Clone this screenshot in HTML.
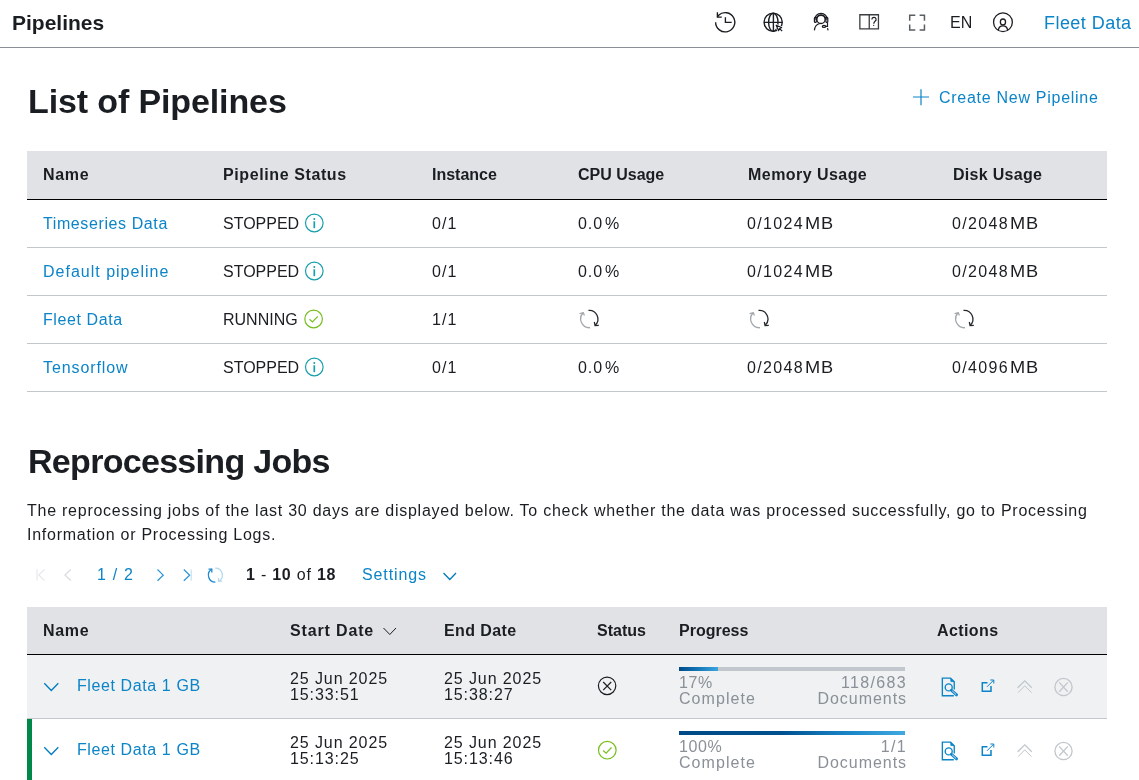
<!DOCTYPE html>
<html><head><meta charset="utf-8">
<style>
*{box-sizing:border-box;margin:0;padding:0}
html,body{width:1139px;height:780px;overflow:hidden;background:#fff}
body{font-family:"Liberation Sans",sans-serif;color:#1a1d21;position:relative;will-change:transform}
.abs{position:absolute;white-space:nowrap}
.blue{color:#0b84c8}
#topbar{position:absolute;left:0;top:0;width:1139px;height:48px;border-bottom:1px solid #8a9097}
.title{left:12px;top:11px;font-size:21px;font-weight:bold;line-height:24px;letter-spacing:0px}
h1{position:absolute;font-size:34px;font-weight:bold;line-height:40px;white-space:nowrap}
.box{position:absolute;left:27px;width:1080px}
.cell{position:absolute;white-space:nowrap;font-size:16px;line-height:20px}
.th{font-weight:bold}
svg{position:absolute;overflow:visible}
.lnk{letter-spacing:0.6px}
.num{letter-spacing:0.4px}
.prog{color:#8a9097;font-size:16px;line-height:16px;letter-spacing:0.5px}
</style></head>
<body>
<!-- top bar -->
<div id="topbar">
  <div class="abs title">Pipelines</div>
  <!-- history -->
  <svg style="left:713px;top:10px" width="24" height="24" viewBox="0 0 24 24" fill="none" stroke="#1a1d21" stroke-width="1.35">
    <path d="M2.6 12.3 A9.6 9.6 0 1 0 5.6 5.3 L4.4 7.15"/>
    <path d="M4.4 2.3 V7.15 H8.8"/>
    <path d="M12.4 7.15 V12.35 H18.7"/>
  </svg>
  <!-- globe -->
  <svg style="left:761px;top:10px" width="24" height="24" viewBox="0 0 24 24" fill="none" stroke="#1a1d21" stroke-width="1.4">
    <circle cx="12.15" cy="12.3" r="9.1"/>
    <ellipse cx="12.3" cy="12.3" rx="4.7" ry="9.1"/>
    <path d="M12.4 3.2 V21.4 M3.05 12.35 H21.25"/>
    <path d="M15.2 15.2 L21 17.6 L17.6 21 Z" fill="#fff" stroke="#fff" stroke-width="2.4"/>
    <path d="M15.2 15.2 L20.6 17.5 L18.6 18.6 L17.5 20.6 Z M18.6 18.6 L21.2 21.2" fill="#fff" stroke-width="1.2" stroke-linejoin="round"/>
  </svg>
  <!-- headset -->
  <svg style="left:809px;top:10px" width="24" height="24" viewBox="0 0 24 24" fill="none" stroke="#1a1d21" stroke-width="1.2">
    <circle cx="12" cy="9.4" r="4.1" stroke-width="1.3"/>
    <path d="M5.7 9.6 A6.3 6.3 0 0 1 18.3 9.6"/>
    <path d="M7 9.8 A5 5 0 0 1 17 9.8"/>
    <rect x="5.4" y="7.4" width="1.9" height="5" rx="0.9"/>
    <rect x="16.9" y="7.4" width="1.9" height="5" rx="0.9"/>
    <path d="M5.4 20.4 C5.8 16.5 8 14 11 13.5"/>
    <path d="M18.5 12.4 V16.3 H16.5"/>
    <ellipse cx="15" cy="16.4" rx="1.7" ry="1"/>
    <path d="M18.5 18.2 L19.1 20.4"/>
  </svg>
  <!-- book help -->
  <svg style="left:857px;top:10px" width="24" height="24" viewBox="0 0 24 24" fill="none" stroke="#3a3d41" stroke-width="1.3">
    <path d="M12.25 4.75 H2.85 V18.85 H21.45 V4.75 Z M12.25 4.75 V19.3" />
    <path d="M14.9 9.5 A2.1 2.1 0 1 1 17.8 11.4 C17.1 11.8 16.9 12.5 16.8 13.8" stroke="#1a1d21" stroke-width="1.2"/>
    <circle cx="16.7" cy="15.3" r="0.65" fill="#1a1d21" stroke="none"/>
  </svg>
  <!-- fullscreen -->
  <svg style="left:905px;top:10px" width="24" height="24" viewBox="0 0 24 24" fill="none" stroke="#595e62" stroke-width="1.5">
    <path d="M4.7 10.8 V5.15 H10.3 M14.6 5.15 H19.45 V10.8 M19.45 14.6 V19.95 H14.6 M10.3 19.95 H4.7 V14.6"/>
  </svg>
  <div class="abs" style="left:950px;top:13px;font-size:16px;line-height:20px">EN</div>
  <!-- user -->
  <svg style="left:991px;top:10px" width="24" height="24" viewBox="0 0 24 24" fill="none" stroke="#1a1d21" stroke-width="1.3">
    <circle cx="11.95" cy="12.25" r="9.4"/>
    <ellipse cx="11.95" cy="11.9" rx="2.6" ry="2.9"/>
    <path d="M7.4 20.3 C7.6 17.3 9.5 15.9 11.95 15.9 C14.4 15.9 16.3 17.3 16.6 20.3"/>
  </svg>
  <div class="abs blue" style="left:1044px;top:12px;font-size:18px;line-height:22px;letter-spacing:0.45px">Fleet Data</div>
</div>

<h1 style="left:28px;top:81px;letter-spacing:-0.12px">List of Pipelines</h1>
<svg style="left:911px;top:87px" width="20" height="20" viewBox="0 0 20 20" fill="none" stroke="#0b84c8" stroke-width="1.2">
  <path d="M10 2.3 V18.2 M2 10 H18"/>
</svg>
<div class="abs blue" style="left:939px;top:88px;font-size:16px;line-height:20px;letter-spacing:0.72px">Create New Pipeline</div>

<!-- table 1 -->
<div class="box" style="top:151px;height:49px;background:#e0e2e5;border-bottom:1px solid #000"></div>
<div class="box" style="top:200px;height:48px;border-bottom:1px solid #c1c7cc"></div>
<div class="box" style="top:247px;height:49px;border-bottom:1px solid #c1c7cc"></div>
<div class="box" style="top:295px;height:49px;border-bottom:1px solid #c1c7cc"></div>
<div class="box" style="top:343px;height:49px;border-bottom:1px solid #c1c7cc"></div>

<div class="cell th" style="left:43px;top:165px;letter-spacing:0.7px">Name</div>
<div class="cell th" style="left:223px;top:165px;letter-spacing:0.6px">Pipeline Status</div>
<div class="cell th" style="left:432px;top:165px">Instance</div>
<div class="cell th" style="left:578px;top:165px">CPU Usage</div>
<div class="cell th" style="left:748px;top:165px;letter-spacing:0.45px">Memory Usage</div>
<div class="cell th" style="left:953px;top:165px;letter-spacing:0.3px">Disk Usage</div>

<div class="cell blue lnk" style="left:43px;top:214px">Timeseries Data</div>
<div class="cell" style="left:223px;top:214px">STOPPED</div>
<div class="cell num" style="letter-spacing:1.1px;left:432px;top:214px">0/1</div>
<div class="cell" style="left:578px;top:214px"><span style="letter-spacing:0.9px">0.0</span><span style="margin-left:2px">%</span></div>
<div class="cell" style="left:747px;top:214px"><span style="letter-spacing:1.35px">0/1024</span><span style="margin-left:1px;letter-spacing:0.6px;display:inline-block;transform:scaleX(1.14);transform-origin:0 0">MB</span></div>
<div class="cell" style="left:952px;top:214px"><span style="letter-spacing:1.35px">0/2048</span><span style="margin-left:1px;letter-spacing:0.6px;display:inline-block;transform:scaleX(1.14);transform-origin:0 0">MB</span></div>

<div class="cell blue lnk" style="left:43px;top:262px;letter-spacing:1px">Default pipeline</div>
<div class="cell" style="left:223px;top:262px">STOPPED</div>
<div class="cell num" style="letter-spacing:1.1px;left:432px;top:262px">0/1</div>
<div class="cell" style="left:578px;top:262px"><span style="letter-spacing:0.9px">0.0</span><span style="margin-left:2px">%</span></div>
<div class="cell" style="left:747px;top:262px"><span style="letter-spacing:1.35px">0/1024</span><span style="margin-left:1px;letter-spacing:0.6px;display:inline-block;transform:scaleX(1.14);transform-origin:0 0">MB</span></div>
<div class="cell" style="left:952px;top:262px"><span style="letter-spacing:1.35px">0/2048</span><span style="margin-left:1px;letter-spacing:0.6px;display:inline-block;transform:scaleX(1.14);transform-origin:0 0">MB</span></div>

<div class="cell blue lnk" style="left:43px;top:310px">Fleet Data</div>
<div class="cell" style="left:223px;top:310px">RUNNING</div>
<div class="cell num" style="letter-spacing:1.1px;left:432px;top:310px">1/1</div>

<div class="cell blue lnk" style="left:43px;top:358px;letter-spacing:0.9px">Tensorflow</div>
<div class="cell" style="left:223px;top:358px">STOPPED</div>
<div class="cell num" style="letter-spacing:1.1px;left:432px;top:358px">0/1</div>
<div class="cell" style="left:578px;top:358px"><span style="letter-spacing:0.9px">0.0</span><span style="margin-left:2px">%</span></div>
<div class="cell" style="left:747px;top:358px"><span style="letter-spacing:1.35px">0/2048</span><span style="margin-left:1px;letter-spacing:0.6px;display:inline-block;transform:scaleX(1.14);transform-origin:0 0">MB</span></div>
<div class="cell" style="left:952px;top:358px"><span style="letter-spacing:1.35px">0/4096</span><span style="margin-left:1px;letter-spacing:0.6px;display:inline-block;transform:scaleX(1.14);transform-origin:0 0">MB</span></div>

<!-- info icons -->
<svg style="left:304px;top:213px" width="20" height="20" viewBox="0 0 20 20" fill="none" stroke="#18a0ab" stroke-width="1.2">
  <circle cx="10.3" cy="10" r="8.8"/><path d="M10.3 8.3 V15.2" stroke-width="1.7"/><circle cx="10.3" cy="5.9" r="1" fill="#18a0ab" stroke="none"/>
</svg>
<svg style="left:304px;top:261px" width="20" height="20" viewBox="0 0 20 20" fill="none" stroke="#18a0ab" stroke-width="1.2">
  <circle cx="10.3" cy="10" r="8.8"/><path d="M10.3 8.3 V15.2" stroke-width="1.7"/><circle cx="10.3" cy="5.9" r="1" fill="#18a0ab" stroke="none"/>
</svg>
<svg style="left:304px;top:357px" width="20" height="20" viewBox="0 0 20 20" fill="none" stroke="#18a0ab" stroke-width="1.2">
  <circle cx="10.3" cy="10" r="8.8"/><path d="M10.3 8.3 V15.2" stroke-width="1.7"/><circle cx="10.3" cy="5.9" r="1" fill="#18a0ab" stroke="none"/>
</svg>
<!-- check icon -->
<svg style="left:304px;top:309px" width="20" height="20" viewBox="0 0 20 20" fill="none" stroke="#78be20" stroke-width="1.2">
  <circle cx="9.6" cy="10" r="8.8"/><path d="M5.5 10.3 L8.4 13 L13.8 7.3"/>
</svg>
<!-- spinners -->
<svg style="left:579px;top:309px" width="20" height="20" viewBox="0 0 20 20" fill="none" stroke-width="1.3">
  <path d="M9.44 1.33 A8.7 8.7 0 0 1 16 16.47" stroke="#25292d"/>
  <path d="M15.3 13 L16.1 16.6 L19.8 16.3" stroke="#25292d"/>
  <path d="M11 18.7 A8.7 8.7 0 0 1 4.3 3.8" stroke="#a3a8ad"/>
  <path d="M0.6 4.6 L4.3 3.8 L5.4 6.5" stroke="#a3a8ad"/>
</svg>
<svg style="left:749px;top:309px" width="20" height="20" viewBox="0 0 20 20" fill="none" stroke-width="1.3">
  <path d="M9.44 1.33 A8.7 8.7 0 0 1 16 16.47" stroke="#25292d"/>
  <path d="M15.3 13 L16.1 16.6 L19.8 16.3" stroke="#25292d"/>
  <path d="M11 18.7 A8.7 8.7 0 0 1 4.3 3.8" stroke="#a3a8ad"/>
  <path d="M0.6 4.6 L4.3 3.8 L5.4 6.5" stroke="#a3a8ad"/>
</svg>
<svg style="left:954px;top:309px" width="20" height="20" viewBox="0 0 20 20" fill="none" stroke-width="1.3">
  <path d="M9.44 1.33 A8.7 8.7 0 0 1 16 16.47" stroke="#25292d"/>
  <path d="M15.3 13 L16.1 16.6 L19.8 16.3" stroke="#25292d"/>
  <path d="M11 18.7 A8.7 8.7 0 0 1 4.3 3.8" stroke="#a3a8ad"/>
  <path d="M0.6 4.6 L4.3 3.8 L5.4 6.5" stroke="#a3a8ad"/>
</svg>

<!-- section 2 -->
<h1 style="left:28px;top:441px;letter-spacing:-0.7px">Reprocessing Jobs</h1>
<div class="abs" style="left:27px;top:499px;font-size:16px;line-height:24px;letter-spacing:0.75px">The reprocessing jobs of the last 30 days are displayed below. To check whether the data was processed successfully, go to Processing<br>Information or Processing Logs.</div>

<!-- pagination -->
<svg style="left:30px;top:565px" width="20" height="20" viewBox="0 0 20 20" fill="none" stroke="#e6e8eb" stroke-width="1.2">
  <path d="M7 4.2 V15.4 M14.5 4.5 L8.8 10 L14.5 15.5"/>
</svg>
<svg style="left:58px;top:565px" width="20" height="20" viewBox="0 0 20 20" fill="none" stroke="#d8dce0" stroke-width="1.2">
  <path d="M12.8 4.5 L6.9 10 L12.8 15.5"/>
</svg>
<div class="cell blue" style="left:97px;top:565px;letter-spacing:1.2px">1 / 2</div>
<svg style="left:150px;top:565px" width="20" height="20" viewBox="0 0 20 20" fill="none" stroke="#2a94d6" stroke-width="1.2">
  <path d="M7.5 4.5 L13.2 10.2 L7.5 15.8"/>
</svg>
<svg style="left:177px;top:565px" width="20" height="20" viewBox="0 0 20 20" fill="none" stroke="#2a94d6" stroke-width="1.2">
  <path d="M6.8 4.5 L12.7 10.2 L6.8 15.8"/><path d="M14.2 4.5 V15.8" stroke="#c5e0f3"/>
</svg>
<svg style="left:205px;top:565px" width="20" height="20" viewBox="0 0 20 20" fill="none" stroke-width="1.3">
  <path d="M10.4 17.2 A7 7 0 0 1 6.9 4.14" stroke="#1f8ad0"/>
  <path d="M3.5 4.2 H6.8 V7.5" stroke="#1f8ad0"/>
  <path d="M10.2 3.2 A7 7 0 0 1 13.6 16.4" stroke="#b3d8f0"/>
  <path d="M13.5 13 V16.2 H17" stroke="#b3d8f0"/>
</svg>
<div class="cell" style="left:246px;top:565px;letter-spacing:0.77px"><b>1</b> - <b>10</b> of <b>18</b></div>
<div class="cell blue" style="left:362px;top:565px;letter-spacing:0.9px">Settings</div>
<svg style="left:440px;top:566px" width="20" height="20" viewBox="0 0 20 20" fill="none" stroke="#007bc0" stroke-width="1.3">
  <path d="M3.5 7 L9.8 13.5 L16 7"/>
</svg>

<!-- table 2 -->
<div class="box" style="top:607px;height:48px;background:#e0e2e5;border-bottom:1px solid #000"></div>
<div class="box" style="top:655px;height:64px;background:#eff1f2;border-bottom:1px solid #c1c7cc"></div>
<div class="box" style="top:719px;height:61px;background:#fff"></div>
<div class="abs" style="left:27px;top:719px;width:5px;height:61px;background:#00884a"></div>

<div class="cell th" style="left:43px;top:621px;letter-spacing:0.7px">Name</div>
<div class="cell th" style="left:290px;top:621px;letter-spacing:0.85px">Start Date</div>
<svg style="left:381px;top:622px" width="16" height="16" viewBox="0 0 16 16" fill="none" stroke="#1a1d21" stroke-width="1">
  <path d="M2.5 6 L8.8 12.5 L15 6"/>
</svg>
<div class="cell th" style="left:444px;top:621px;letter-spacing:0.4px">End Date</div>
<div class="cell th" style="left:597px;top:621px">Status</div>
<div class="cell th" style="left:679px;top:621px">Progress</div>
<div class="cell th" style="left:937px;top:621px;letter-spacing:0.4px">Actions</div>

<!-- row 1 -->
<svg style="left:41px;top:677px" width="20" height="20" viewBox="0 0 20 20" fill="none" stroke="#007bc0" stroke-width="1.3">
  <path d="M3.3 6.3 L10.3 13.5 L17.3 6.3"/>
</svg>
<div class="cell blue lnk" style="left:77px;top:676px">Fleet Data 1 GB</div>
<div class="cell num" style="left:290px;top:671px;line-height:16px;letter-spacing:0.9px">25 Jun 2025<br>15:33:51</div>
<div class="cell num" style="left:444px;top:671px;line-height:16px;letter-spacing:0.9px">25 Jun 2025<br>15:38:27</div>
<svg style="left:597px;top:676px" width="20" height="20" viewBox="0 0 20 20" fill="none" stroke="#1a1d21" stroke-width="1.2">
  <circle cx="10.1" cy="9.85" r="8.7"/><path d="M6.2 6 L14.2 14.1 M14.2 6 L6.2 14.1"/>
</svg>
<div class="abs" style="left:679px;top:667px;width:226px;height:4px;background:#c1c7cc"></div>
<div class="abs" style="left:679px;top:667px;width:39px;height:4px;background:linear-gradient(90deg,#004b87,#0f6fb0 40%,#3ba5de)"></div>
<div class="cell prog" style="left:679px;top:675px;letter-spacing:0.6px">17%</div>
<div class="cell prog" style="left:679px;top:691px;letter-spacing:1.05px">Complete</div>
<div class="cell prog" style="left:791px;top:675px;width:116px;text-align:right;letter-spacing:1.35px">118/683</div>
<div class="cell prog" style="left:791px;top:691px;width:116px;text-align:right;letter-spacing:0.95px">Documents</div>

<!-- row 2 -->
<svg style="left:41px;top:741px" width="20" height="20" viewBox="0 0 20 20" fill="none" stroke="#007bc0" stroke-width="1.3">
  <path d="M3.3 6.3 L10.3 13.5 L17.3 6.3"/>
</svg>
<div class="cell blue lnk" style="left:77px;top:740px">Fleet Data 1 GB</div>
<div class="cell num" style="left:290px;top:735px;line-height:16px;letter-spacing:0.9px">25 Jun 2025<br>15:13:25</div>
<div class="cell num" style="left:444px;top:735px;line-height:16px;letter-spacing:0.9px">25 Jun 2025<br>15:13:46</div>
<svg style="left:597px;top:740px" width="20" height="20" viewBox="0 0 20 20" fill="none" stroke="#78be20" stroke-width="1.2">
  <circle cx="10.3" cy="10.2" r="8.8"/><path d="M6.2 10.5 L9.1 13.2 L14.5 7.5"/>
</svg>
<div class="abs" style="left:679px;top:731px;width:226px;height:4px;background:linear-gradient(90deg,#004b87,#00508f 45%,#1a86c8 75%,#41a9e0)"></div>
<div class="cell prog" style="left:679px;top:739px;letter-spacing:0.6px">100%</div>
<div class="cell prog" style="left:679px;top:755px;letter-spacing:1.05px">Complete</div>
<div class="cell prog" style="left:791px;top:739px;width:116px;text-align:right;letter-spacing:1.35px">1/1</div>
<div class="cell prog" style="left:791px;top:755px;width:116px;text-align:right;letter-spacing:0.95px">Documents</div>

<!-- action icons (row1 & row2) -->
<svg style="left:939px;top:676px" width="22" height="22" viewBox="0 0 22 22" fill="none" stroke="#0b84c8" stroke-width="1.35">
  <path d="M15.25 13.4 V5.9 L11.5 2.15 H3.35 V19.75 H14.8"/><path d="M11.8 2.6 L14.8 5.6 L11.8 5.6 Z" fill="#0b84c8" stroke-width="0.7"/>
  <circle cx="9.7" cy="11.4" r="3.5" stroke-width="1.35"/><path d="M12.4 14.2 L17.6 18.9" stroke-width="2.8" stroke-linecap="round"/><path d="M13.2 14.9 L17.2 18.5" stroke="#eff1f2" stroke-width="0.8"/>
</svg>
<svg style="left:977px;top:676px" width="20" height="20" viewBox="0 0 20 20" fill="none" stroke="#0b84c8" stroke-width="1.5">
  <path d="M10.5 6.8 H5.3 V15.2 H14 V10"/><path d="M10 10.8 L16.6 4.2 M13.3 4 H16.8 V7.5" stroke-width="1"/>
</svg>
<svg style="left:1015px;top:676px" width="20" height="20" viewBox="0 0 20 20" fill="none" stroke="#c1c7cc" stroke-width="1.3">
  <path d="M2.7 11.7 L9.75 4.9 L16.8 11.7"/><path d="M3.2 16.6 L9.75 9.8 L16.5 16.6" stroke-width="1"/>
</svg>
<svg style="left:1053px;top:676px" width="22" height="22" viewBox="0 0 22 22" fill="none" stroke="#c1c7cc" stroke-width="1.3">
  <circle cx="10.5" cy="11.05" r="8.6"/><path d="M6.2 6.4 L14.8 15.7 M14.8 6.4 L6.2 15.7"/>
</svg>
<svg style="left:939px;top:740px" width="22" height="22" viewBox="0 0 22 22" fill="none" stroke="#0b84c8" stroke-width="1.35">
  <path d="M15.25 13.4 V5.9 L11.5 2.15 H3.35 V19.75 H14.8"/><path d="M11.8 2.6 L14.8 5.6 L11.8 5.6 Z" fill="#0b84c8" stroke-width="0.7"/>
  <circle cx="9.7" cy="11.4" r="3.5" stroke-width="1.35"/><path d="M12.4 14.2 L17.6 18.9" stroke-width="2.8" stroke-linecap="round"/><path d="M13.2 14.9 L17.2 18.5" stroke="#fff" stroke-width="0.8"/>
</svg>
<svg style="left:977px;top:740px" width="20" height="20" viewBox="0 0 20 20" fill="none" stroke="#0b84c8" stroke-width="1.5">
  <path d="M10.5 6.8 H5.3 V15.2 H14 V10"/><path d="M10 10.8 L16.6 4.2 M13.3 4 H16.8 V7.5" stroke-width="1"/>
</svg>
<svg style="left:1015px;top:740px" width="20" height="20" viewBox="0 0 20 20" fill="none" stroke="#c1c7cc" stroke-width="1.3">
  <path d="M2.7 11.7 L9.75 4.9 L16.8 11.7"/><path d="M3.2 16.6 L9.75 9.8 L16.5 16.6" stroke-width="1"/>
</svg>
<svg style="left:1053px;top:740px" width="22" height="22" viewBox="0 0 22 22" fill="none" stroke="#c1c7cc" stroke-width="1.3">
  <circle cx="10.5" cy="11.05" r="8.6"/><path d="M6.2 6.4 L14.8 15.7 M14.8 6.4 L6.2 15.7"/>
</svg>

</body></html>
